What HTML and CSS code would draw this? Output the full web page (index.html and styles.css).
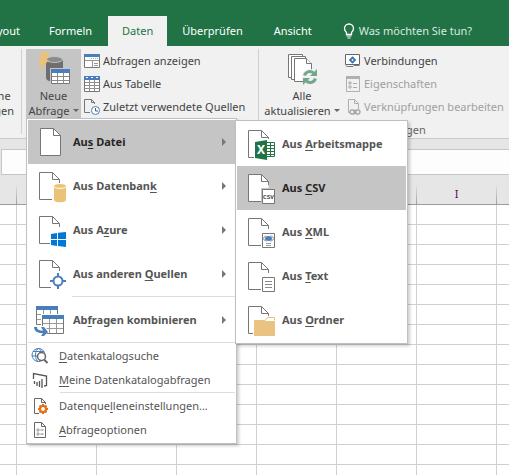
FILE: index.html
```html
<!DOCTYPE html>
<html lang="de">
<head>
<meta charset="utf-8">
<title>Daten abrufen</title>
<link rel="stylesheet" href="styles.css">
</head>
<body>
<svg class="defs" aria-hidden="true">
  <symbol id="page" viewBox="0 0 44 44">
    <path d="M24 35.500H11.500V8.500H24.500L31.500 15.500V19M24.500 8.500V15.500H31.500" fill="none" stroke="#767676"/>
  </symbol>
  <symbol id="note" viewBox="0 0 44 44">
    <path d="M25.500 23.500h12v14h-12z" fill="#fff" stroke="#767676"/>
  </symbol>
</svg>
<div class="app">
  <nav class="tabs">
    <a class="tab tab-cut" href="#">yout</a>
    <a class="tab" href="#">Formeln</a>
    <a class="tab active" href="#">Daten</a>
    <a class="tab" href="#">Überprüfen</a>
    <a class="tab" href="#">Ansicht</a>
    <a class="tab tell" href="#">
      <svg width="12" height="16" viewBox="0 0 12 16" fill="none" stroke="#fff"><path d="M3.500 11.500V9.500C2 8 1.500 7 1.500 5.500a4.500 4.500 0 0 1 9 0C10.500 7 10 8 8.500 9.500v2z" stroke-width="1.300"/><path d="M3.500 13h5M4.500 15h3" stroke-width="1.200"/></svg>
      <span>Was möchten Sie tun?</span>
    </a>
  </nav>

  <div class="ribbon">
    <section class="group group-cut">
      <button class="big"><span>ne</span><span>gen</span></button>
    </section>

    <section class="group group-query">
      <div class="holder">
        <button class="big open">
          <svg width="34" height="34" viewBox="0 0 34 34">
            <path d="M9 8v18c0 2 4 4 8 4s9-2 9-4V8z" fill="#6e6e6e"/>
            <ellipse cx="17.500" cy="7.500" rx="8" ry="3" fill="#8b8b8b" stroke="#c5c5c5"/>
            <path d="M5 0h8L9 8h3L1 20 4 11H1z" fill="#ecc376"/>
            <path d="M13 16h21v17H13z" fill="#c5c5c5"/>
            <path d="M14.500 17.500h18v14h-18z" fill="#fff" stroke="#767676"/>
            <path d="M14 17h19v4H14z" fill="#4a7ebb"/>
            <path d="M20.500 21v11M26.500 21v11M15 24.500h17M15 28.500h17" stroke="#8a8a8a"/>
          </svg>
          <span>Neue</span>
          <span class="with-arrow">Abfrage <i class="down"></i></span>
        </button>

        <ul class="menu">
          <li>
            <button class="item hot">
              <svg class="icon" viewBox="0 0 44 44"><path d="M12.500 8.500H25.500L32.500 15.500V35.500H12.500z" fill="#fff" stroke="#767676"/><path d="M25.500 8.500V15.500H32.500" fill="none" stroke="#767676"/></svg>
              <span>Au<u>s</u> Datei</span><i class="right"></i>
            </button>
            <ul class="menu submenu">
              <li><button class="item">
                <svg class="icon" viewBox="0 0 44 44"><use href="#page"/><path d="M17 17h22v22H17z" fill="#fff"/><path d="M29.500 20.500h8v14h-8" fill="#fff" stroke="#217346"/><path d="M30 23.500h7M30 26.500h7M30 29.500h7M30 32.500h7M33.500 21v14" stroke="#217346"/><path d="M18 20l12-2v20l-12-2z" fill="#217346"/><text class="xmark" x="24" y="32">X</text></svg>
                <span>Aus <u>A</u>rbeitsmappe</span></button></li>
              <li><button class="item hot">
                <svg class="icon" viewBox="0 0 44 44"><path d="M11.500 8.500H24.500L31.500 15.500V35.500H11.500z" fill="#fff"/><use href="#page"/><path d="M24 22h15v17H24z" fill="#c5c5c5"/><use href="#note"/><text class="csvmark" x="31.500" y="33">CSV</text></svg>
                <span>Aus <u>C</u>SV</span></button></li>
              <li><button class="item">
                <svg class="icon" viewBox="0 0 44 44"><use href="#page"/><use href="#note"/><path d="M29 25.500l-3 3 3 3M34 25.500l3 3-3 3" fill="none" stroke="#767676"/><ellipse cx="31.500" cy="28.500" rx="3.500" ry="2.500" fill="#4a7ebb"/><path d="M29 33.500h5M29 35.500h5" stroke="#999"/></svg>
                <span>Aus <u>X</u>ML</span></button></li>
              <li><button class="item">
                <svg class="icon" viewBox="0 0 44 44"><use href="#page"/><use href="#note"/><path d="M28 27.500h7M28 30.500h7M28 33.500h7" stroke="#8a8a8a"/></svg>
                <span>Aus <u>T</u>ext</span></button></li>
              <li><button class="item">
                <svg class="icon" viewBox="0 0 44 44"><use href="#page"/><path d="M16 21h12l2-3h9v21H16z" fill="#fff"/><path d="M28 22.500l2.500-3h7v3" fill="#fff" stroke="#eac282"/><path d="M17 23q0-1 1-1h9l2 1h8q1 0 1 1v14H17z" fill="#eac282"/></svg>
                <span>Aus <u>O</u>rdner</span></button></li>
            </ul>
          </li>
          <li><button class="item">
            <svg class="icon" viewBox="0 0 44 44"><use href="#page"/><path d="M25 19h14v20H25z" fill="#fff"/><path d="M26 22v14c0 3 12 3 12 0V22z" fill="#ecc376"/><ellipse cx="32" cy="22" rx="6" ry="2" fill="#ecc376"/><path d="M26 22.500c1 2.500 11 2.500 12 0" fill="none" stroke="#fff"/></svg>
            <span>Aus Datenban<u>k</u></span><i class="right"></i></button></li>
          <li><button class="item">
            <svg class="icon" viewBox="0 0 44 44"><use href="#page"/><path d="M22 22h17v17H22z" fill="#fff"/><path d="M23 26l6-1v6h-6zM30 24.800L38 24v7h-8zM23 32h6v6l-6-1zM30 32h8v7l-8-1z" fill="#0078d7"/></svg>
            <span>Aus A<u>z</u>ure</span><i class="right"></i></button></li>
          <li><button class="item">
            <svg class="icon" viewBox="0 0 44 44"><use href="#page"/><path d="M23 21h16v16H23z" fill="#fff"/><circle cx="30" cy="29" r="4.500" fill="#fff" stroke="#4a7ebb" stroke-width="2"/><path d="M30 21v4M30 33v4M22 29h4M34 29h4" stroke="#4a7ebb" stroke-width="2"/></svg>
            <span>Aus anderen <u>Q</u>uellen</span><i class="right"></i></button></li>
          <li class="rule rule-big"></li>
          <li><button class="item">
            <svg class="icon" viewBox="0 0 44 44"><path d="M8.500 8.500h21v18h-21z" fill="#fff" stroke="#767676"/><path d="M8 8h22v4H8z" fill="#4a7ebb"/><path d="M15.500 12v14M22.500 12v14M9 16.500h20M9 21.500h20" stroke="#9a9a9a"/><path d="M13 16h24v21H13z" fill="#fff"/><path d="M14.500 17.500h21v18h-21z" fill="#fff" stroke="#767676"/><path d="M14 17h22v4H14z" fill="#4a7ebb"/><path d="M21.500 21v14M28.500 21v14M15 25.500h20M15 30.500h20" stroke="#9a9a9a"/><path d="M5 28h11l5 5-5 6H5z" fill="#fff"/><path d="M7.500 29c0 4 3 5 9 5" fill="none" stroke="#4a7ebb" stroke-width="3"/><path d="M13 29h3l4 5-4 4h-3l3-4z" fill="#4a7ebb"/></svg>
            <span>Ab<u>f</u>ragen kombinieren</span><i class="right"></i></button></li>
          <li class="rule"></li>
          <li><button class="item small">
            <svg class="icon" viewBox="0 0 31 24"><g fill="none" stroke="#4a7ebb"><circle cx="10.500" cy="11" r="6.500"/><ellipse cx="10.500" cy="11" rx="3" ry="6.500"/><path d="M5 7.500h11M4 12h8"/></g><circle cx="13.500" cy="12.500" r="4" fill="#fff" stroke="#666" stroke-width="1.500"/><path d="M16 15.500l3.500 3.500" stroke="#666" stroke-width="2"/></svg>
            <span><u>D</u>atenkatalogsuche</span></button></li>
          <li><button class="item small">
            <svg class="icon" viewBox="0 0 31 24"><path d="M5.500 11V5.500L18.500 8v9.500l-2.500.5" fill="none" stroke="#555" stroke-width="1.300"/><path d="M6.500 13v3M9 14v4M11.500 13v6M14 11v9" stroke="#555" stroke-width="1.300"/></svg>
            <span><u>M</u>eine Datenkatalogabfragen</span></button></li>
          <li class="rule rule-small"></li>
          <li><button class="item small">
            <svg class="icon" viewBox="0 0 31 24"><path d="M11 19.500H6.500V4.500H13.500L17.500 8.500V10M13.500 4.500V8.500H17.500" fill="none" stroke="#666"/><circle cx="15" cy="15" r="3" fill="#fff" stroke="#e66c16" stroke-width="2"/><path d="M15 10v2M15 18v2M10 15h2M18 15h2M11.500 11.500l1.500 1.500M17 17l1.500 1.500M11.500 18.500l1.500-1.500M17 13l1.500-1.500" stroke="#e66c16" stroke-width="2"/></svg>
            <span>Datenque<u>l</u>leneinstellungen...</span></button></li>
          <li><button class="item small">
            <svg class="icon" viewBox="0 0 31 24"><path d="M6.500 4.500H13.500L17.500 8.500V19.500H6.500zM13.500 4.500V8.500H17.500" fill="none" stroke="#666"/><path d="M9 11h2v2H9zM9 15h2v2H9z" fill="none" stroke="#888" stroke-width=".8"/><path d="M12.500 12h3M12.500 16h3" stroke="#777"/></svg>
            <span><u>A</u>bfrageoptionen</span></button></li>
        </ul>
      </div>

      <div class="commands">
        <button class="command">
          <svg width="16" height="16" viewBox="0 0 16 16"><path d="M.5 1.500h15v13H.5z" fill="#fff" stroke="#767676"/><path d="M0 1h16v3H0z" fill="#4a7ebb"/><path d="M1 7.500h14M8.500 8v6M10 10.500h4M10 12.500h4" stroke="#999"/><path d="M7 5.500h7" stroke="#aaa" stroke-dasharray="1 1"/></svg>
          <span>Abfragen anzeigen</span></button>
        <button class="command">
          <svg width="16" height="16" viewBox="0 0 16 16"><path d="M.5.500h15v15H.5z" fill="#fff" stroke="#767676"/><path d="M0 0h16v4H0z" fill="#4a7ebb"/><path d="M2 1.500h2M7 1.500h2M12 1.500h2" stroke="#fff"/><path d="M5.500 4v11M10.500 4v11M1 6.500h14M1 9.500h14M1 12.500h14" stroke="#8f8f8f"/></svg>
          <span>Aus Tabelle</span></button>
        <button class="command">
          <svg width="16" height="16" viewBox="0 0 16 16"><path d="M6 13.500H.5V.500H7.500L10.500 3.500V5M7.500.500V3.500H10.500" fill="none" stroke="#767676"/><circle cx="11.500" cy="11.500" r="4" fill="#fff" stroke="#4a7ebb"/><path d="M11.500 9v3H14" fill="none" stroke="#555"/></svg>
          <span>Zuletzt verwendete Quellen</span></button>
      </div>
    </section>

    <section class="group group-links">
      <div class="row">
        <button class="big refresh">
          <svg width="34" height="34" viewBox="0 0 34 34"><g fill="#fff" stroke="#767676"><path d="M3.500 25.500V2.500h14v23z"/><path d="M6.500 27.500V4.500h14v23z"/><path d="M9.500 29.500V6.500H21.500L26.500 11.500V29.500z"/><path d="M21.500 6.500V11.500H26.500"/></g><circle cx="25" cy="25" r="8" fill="#f1f1f1"/><g fill="none" stroke="#72a78c" stroke-width="3"><path d="M19.500 23.500a5.500 5.500 0 0 1 9.500-2M30.500 26.500a5.500 5.500 0 0 1-9.500 2"/></g><path d="M32 17v7h-7zM18 33v-7h7z" fill="#72a78c"/></svg>
          <span>Alle</span>
          <span class="with-arrow">aktualisieren <i class="down"></i></span>
        </button>
        <div class="commands">
          <button class="command">
            <svg width="16" height="16" viewBox="0 0 16 16"><path d="M.5 1.500h14v10H.5z" fill="#fff" stroke="#666"/><path d="M1 12.500q0 1 1.500 1H8l1-1h5.500" fill="none" stroke="#767676"/><path d="M7.500 4.500l2.500 2.500-2.500 2.500-2.500-2.500z" fill="#fff" stroke="#3976b5" stroke-width="1.800"/></svg>
            <span>Verbindungen</span></button>
          <button class="command" disabled>
            <svg width="16" height="16" viewBox="0 0 16 16"><path d="M1.500.500h13v15h-13z" fill="none" stroke="#b0b0b0"/><path d="M1 0h14v3H1z" fill="#b0b0b0"/><path d="M4 6h2v2H4zM4 10h2v2H4z" fill="none" stroke="#aaa"/><path d="M8 7.500h4M8 11.500h4" stroke="#aaa"/></svg>
            <span>Eigenschaften</span></button>
          <button class="command" disabled>
            <svg width="16" height="16" viewBox="0 0 16 16"><path d="M5 13.500H3.500V.500H9.500L13.500 4.500V10M9.500.500V4.500H13.500" fill="none" stroke="#b0b0b0"/><g fill="none" stroke="#a5a5a5" stroke-width="1.300"><rect x="5" y="11" width="5" height="4" rx="2"/><rect x="10" y="11" width="5" height="4" rx="2"/><path d="M8 13h4"/></g></svg>
            <span>Verknüpfungen bearbeiten</span></button>
        </div>
      </div>
      <div class="caption">Verbindungen</div>
    </section>
  </div>

  <div class="formula-bar"><input type="text" aria-label="Bearbeitungsleiste"></div>

  <table class="sheet">
    <colgroup><col class="edge"><col class="full"><col class="full"><col class="full"><col class="full"><col class="full"><col class="full"><col></colgroup>
    <thead><tr><th></th><th></th><th></th><th></th><th></th><th></th><th>I</th><th></th></tr></thead>
    <tbody>
      <tr><td><td><td><td><td><td><td><td></tr>
      <tr><td><td><td><td><td><td><td><td></tr>
      <tr><td><td><td><td><td><td><td><td></tr>
      <tr><td><td><td><td><td><td><td><td></tr>
      <tr><td><td><td><td><td><td><td><td></tr>
      <tr><td><td><td><td><td><td><td><td></tr>
      <tr><td><td><td><td><td><td><td><td></tr>
      <tr><td><td><td><td><td><td><td><td></tr>
      <tr><td><td><td><td><td><td><td><td></tr>
      <tr><td><td><td><td><td><td><td><td></tr>
      <tr><td><td><td><td><td><td><td><td></tr>
      <tr><td><td><td><td><td><td><td><td></tr>
      <tr><td><td><td><td><td><td><td><td></tr>
      <tr><td><td><td><td><td><td><td><td></tr>
    </tbody>
  </table>
</div>
</body>
</html>
```

FILE: styles.css
```css
* { box-sizing: border-box; }
body {
  margin: 0;
  background: #fff;
  color: #444;
  font: 11px/16px "Noto Sans", "Open Sans", sans-serif;
}
button, input {
  margin: 0;
  padding: 0;
  border: 0;
  background: none;
  color: inherit;
  font: inherit;
  text-align: left;
  white-space: nowrap;
}
svg { display: block; flex: none; }
u { text-underline-offset: 2px; }
.defs { position: absolute; width: 0; height: 0; }
.app { height: 100vh; overflow: hidden; }

.tabs {
  display: flex;
  padding-top: 16px;
  background: #217346;
}
.tab {
  display: flex;
  flex: none;
  align-items: center;
  height: 30px;
  padding: 0 16px 0 15px;
  color: #fff;
  text-decoration: none;
  white-space: nowrap;
}
.tab-cut { justify-content: flex-end; width: 34px; padding-left: 0; padding-right: 14px; }
.tab.active { padding: 0 14px; background: #f1f1f1; color: #217346; }
.tell { gap: 4px; color: #dbe9e0; }

.ribbon {
  display: flex;
  height: 93px;
  border-bottom: 1px solid #c9c9c9;
  background: #f1f1f1;
}
.group {
  display: flex;
  flex: none;
  padding-top: 3px;
}
.group-cut {
  justify-content: flex-end;
  width: 22px;
  padding-right: 7px;
}
.group-query { align-items: flex-start; width: 237px; padding-left: 4px; }
.group-links { flex-direction: column; width: 260px; }
.group-cut, .group-query {
  border-right: 1px solid;
  border-image: linear-gradient(#f1f1f1 4px, #d0d0d0 4px 87px, #f1f1f1 87px) 1;
}
.row { display: flex; }
.holder { position: relative; }
.big {
  display: flex;
  flex-direction: column;
  align-items: center;
  justify-content: flex-end;
  height: 69px;
  line-height: 15px;
}
.big svg { margin-bottom: 2px; }
.open { width: 55px; background: #c5c5c5; }
.refresh { width: 86px; }
.with-arrow { display: flex; align-items: center; gap: 3px; }
.down {
  border: 3px solid transparent;
  border-top-color: #666;
  border-bottom-width: 0;
}
.commands { display: flex; flex-direction: column; padding-left: 3px; }
.group-links .commands { padding-left: 0; }
.command {
  display: flex;
  align-items: center;
  gap: 3px;
  height: 23px;
}
.command:disabled { color: #a0a0a0; }
.caption { padding-top: 4px; color: #666; text-align: center; }

.menu {
  position: absolute;
  z-index: 1;
  top: 100%;
  left: 0;
  width: 211px;
  margin: 0;
  padding: 1px;
  border: 1px solid #c0c0c0;
  background: #fff;
  box-shadow: 2px 2px 3px rgba(0, 0, 0, .2);
  color: #555;
  list-style: none;
}
.menu li { position: relative; }
.submenu { top: 0; left: 100%; width: 173px; }
.item {
  display: flex;
  align-items: center;
  width: 100%;
  height: 44px;
  font-weight: 700;
}
.item.hot { background: #c5c5c5; color: #262626; }
.icon { width: 44px; height: 44px; margin-right: 1px; }
.small { height: 24px; font-weight: 400; }
.small .icon { width: 31px; height: 24px; margin-right: 0; }
.right {
  margin: 0 9px 0 auto;
  border: 4px solid transparent;
  border-left-color: #777;
  border-right-width: 0;
}
.rule { height: 2px; border-top: 1px solid #dcdcdc; }
.rule-big { margin-left: 44px; }
.rule-small { margin-left: 32px; }
.xmark { fill: #fff; font-size: 12px; font-weight: 700; text-anchor: middle; }
.csvmark { fill: #444; font-family: "Liberation Mono", monospace; font-size: 6px; text-anchor: middle; }

.formula-bar { padding: 10px 0 0 1px; background: #e6e6e6; }
.formula-bar input {
  display: block;
  width: 100%;
  height: 26px;
  border: 1px solid #c6c6c6;
  border-right: 0;
  background: #fdfdfd;
}

.sheet {
  width: 100%;
  border-spacing: 0;
  table-layout: fixed;
}
.edge { width: 17px; }
.full { width: 80px; }
.sheet th {
  height: 30px;
  padding: 9px 0 0;
  border-right: 1px solid;
  border-bottom: 1px solid #999;
  border-image: linear-gradient(#e6e6e6 10px, #999) 1;
  background: #e6e6e6;
  color: #5a0a55;
  font-weight: 400;
}
.sheet td {
  height: 20px;
  padding: 0;
  border-right: 1px solid #d0d0d0;
  border-bottom: 1px solid #d0d0d0;
}
.sheet th:last-child, .sheet td:last-child { border-right-width: 0; }
```
